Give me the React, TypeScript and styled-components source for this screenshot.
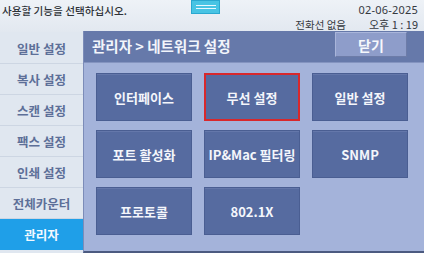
import styled, { createGlobalStyle } from "styled-components";

const GlobalStyle = createGlobalStyle`
  html, body {
    margin: 0;
    padding: 0;
    background: #e4eaf2;
  }
  body {
    font-family: "Noto Sans CJK KR", "Noto Sans", sans-serif;
  }
`;

const menuItems = ["일반 설정", "복사 설정", "스캔 설정", "팩스 설정", "인쇄 설정", "전체카운터", "관리자"];

const tiles = [
  { label: "인터페이스" },
  { label: "무선 설정", focused: true },
  { label: "일반 설정" },
  { label: "포트 활성화" },
  { label: "IP&Mac 필터링" },
  { label: "SNMP" },
  { label: "프로토콜" },
  { label: "802.1X" },
];

export default function App() {
  return (
    <Screen>
      <GlobalStyle />
      <StatusBar>
        <Message>사용할 기능을 선택하십시오.</Message>
        <Indicator>
          <span />
          <span />
        </Indicator>
        <StatusRight>
          <DateText>02-06-2025</DateText>
          <StatusLine>
            <span>전화선 없음</span>
            <span>오후 1 : 19</span>
          </StatusLine>
        </StatusRight>
      </StatusBar>
      <Body>
        <Sidebar>
          {menuItems.map((item) => (
            <MenuItem key={item} $active={item === "관리자"}>
              {item}
            </MenuItem>
          ))}
        </Sidebar>
        <Panel>
          <PanelHeader>
            <Title>관리자 &gt; 네트워크 설정</Title>
            <CloseButton>닫기</CloseButton>
          </PanelHeader>
          <Grid>
            {tiles.map((t) => (
              <Tile key={t.label} $focused={t.focused}>
                {t.label}
              </Tile>
            ))}
          </Grid>
        </Panel>
      </Body>
    </Screen>
  );
}

const Screen = styled.div`
  width: 424px;
  height: 253px;
  display: flex;
  flex-direction: column;
  overflow: hidden;
  background: #e4eaf2;
`;

const StatusBar = styled.header`
  height: 32px;
  display: grid;
  grid-template-columns: 1fr auto 1fr;
  align-items: start;
  background: linear-gradient(#eef2f7, #e2e8f0);
  color: #2e3238;
  padding: 0 6px 0 2px;
`;

const Message = styled.div`
  font-size: 10.6px;
  font-weight: 500;
  line-height: 14px;
  padding-top: 4px;
  white-space: nowrap;
`;

const Indicator = styled.div`
  width: 29px;
  height: 14px;
  margin-right: 9px;
  background: #48c4e4;
  border: 1px solid #2aa8d0;
  box-sizing: border-box;
  display: flex;
  flex-direction: column;
  justify-content: center;
  align-items: center;
  gap: 2px;
  span {
    display: block;
    width: 20px;
    height: 1px;
    background: #e8f8ff;
  }
`;

const StatusRight = styled.div`
  display: flex;
  flex-direction: column;
  align-items: flex-end;
  font-size: 11px;
  line-height: 13px;
  color: #35393f;
  white-space: nowrap;
`;

const DateText = styled.div`
  padding-top: 3px;
  font-family: "Noto Sans", sans-serif;
  font-size: 11px;
  letter-spacing: 0.2px;
`;

const StatusLine = styled.div`
  display: flex;
  gap: 23px;
  margin-top: 2px;
  span:first-child {
    font-size: 10.5px;
  }
`;

const Body = styled.div`
  flex: 1;
  display: flex;
`;

const Sidebar = styled.nav`
  width: 83px;
  display: flex;
  flex-direction: column;
  padding-top: 1px;
  background: #e0e7f0;
`;

const MenuItem = styled.div<{ $active?: boolean }>`
  height: 31px;
  display: flex;
  align-items: center;
  justify-content: center;
  font-size: 12.5px;
  font-weight: 700;
  color: ${(p) => (p.$active ? "#f4f9ff" : "#5d6f98")};
  background: ${(p) => (p.$active ? "#1f9fe8" : "transparent")};
  border-bottom: 1px solid ${(p) => (p.$active ? "#1f9fe8" : "#cdd6e3")};
  box-sizing: border-box;
`;

const Panel = styled.main`
  flex: 1;
  display: flex;
  flex-direction: column;
  margin-top: -1px;
  background: #a4b3da;
  border-left: 1px solid #7c8cb8;
  border-bottom: 2px solid #4c5a80;
`;

const PanelHeader = styled.div`
  height: 31px;
  display: flex;
  align-items: flex-start;
  justify-content: space-between;
  padding: 0 17px 0 8px;
  background: #6679aa;
  border-bottom: 1px solid #8494c0;
`;

const Title = styled.h1`
  margin: 0;
  padding-top: 5px;
  font-size: 14.5px;
  line-height: 20px;
  font-weight: 700;
  color: #f2f5fb;
`;

const CloseButton = styled.button`
  width: 72px;
  height: 25px;
  margin-top: 1px;
  font-family: inherit;
  font-size: 14px;
  font-weight: 700;
  color: #f6f8fc;
  background: #8e9dca;
  border: 1px solid #a9b5da;
  border-right-color: #6d7ca8;
  border-bottom-color: #6d7ca8;
  padding: 0;
`;

const Grid = styled.div`
  display: grid;
  grid-template-columns: repeat(3, 96px);
  grid-auto-rows: 48px;
  column-gap: 12px;
  row-gap: 9px;
  padding: 10px 0 0 12px;
`;

const Tile = styled.button<{ $focused?: boolean }>`
  font-family: inherit;
  font-size: 13px;
  font-weight: 700;
  color: #f4f6fb;
  background: #566ba0;
  border: ${(p) => (p.$focused ? "2px solid #d8282c" : "1px solid #4a5e92")};
  box-shadow: ${(p) => (p.$focused ? "none" : "inset 0 1px 0 #6477aa")};
  padding: 0;
`;
